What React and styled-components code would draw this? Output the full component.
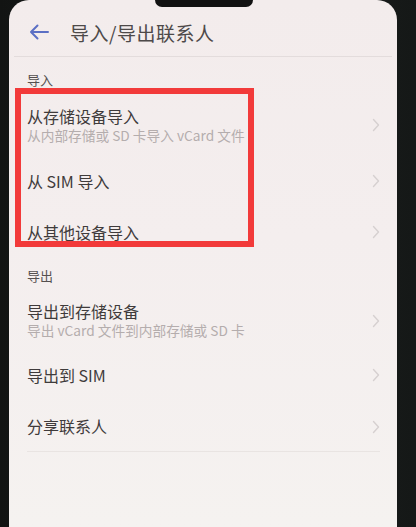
import React from 'react'
import styled, { createGlobalStyle } from 'styled-components'

const GlobalStyle = createGlobalStyle`
    html, body {
        margin: 0;
        padding: 0;
        background: #151817;
    }
    body {
        font-family: 'Noto Sans CJK SC', 'Noto Sans', sans-serif;
    }
`

const importItems = [
    { title: '从存储设备导入', sub: '从内部存储或 SD 卡导入 vCard 文件', h: 60 },
    { title: '从 SIM 导入', h: 52 },
    { title: '从其他设备导入', h: 50 },
]

const exportItems = [
    { title: '导出到存储设备', sub: '导出 vCard 文件到内部存储或 SD 卡', h: 55 },
    { title: '导出到 SIM', h: 54 },
    { title: '分享联系人', h: 50, last: true },
]

const Chevron = () => (
    <svg width="8" height="14" viewBox="0 0 8 14" fill="none">
        <path d="M1.5 1.5L6.5 7L1.5 12.5" stroke="#d6d0d0" strokeWidth="1.4" strokeLinecap="round" strokeLinejoin="round" />
    </svg>
)

const BackArrow = () => (
    <svg width="20" height="16" viewBox="0 0 20 16" fill="none">
        <path d="M19 8H2M8.5 1.5L2 8l6.5 6.5" stroke="#5b6fc4" strokeWidth="2" strokeLinecap="round" strokeLinejoin="round" />
    </svg>
)

const Row = ({ item }) => (
    <ListRow h={item.h} last={item.last}>
        <TextCol>
            <RowTitle>{item.title}</RowTitle>
            {item.sub && <RowSub>{item.sub}</RowSub>}
        </TextCol>
        <Chevron />
    </ListRow>
)

const App = () => {
    return (
        <>
            <GlobalStyle />
            <Page>
                <Screen>
                    <Notch />
                    <Header>
                        <BackArrow />
                        <HeaderTitle>导入/导出联系人</HeaderTitle>
                    </Header>
                    <Content>
                        <SectionLabel top={14} h={38}>导入</SectionLabel>
                        {importItems.map((item) => (
                            <Row key={item.title} item={item} />
                        ))}
                        <SectionLabel top={10} h={36}>导出</SectionLabel>
                        {exportItems.map((item) => (
                            <Row key={item.title} item={item} />
                        ))}
                    </Content>
                    <Highlight />
                </Screen>
            </Page>
        </>
    )
}

export default App

const Page = styled.div`
    display: flex;
    width: 416px;
    height: 527px;
    padding: 0 19px 0 9px;
    box-sizing: border-box;
    background: linear-gradient(90deg, #121413 0%, #1d201f 50%, #151817 100%);
    overflow: hidden;
`

const Screen = styled.div`
    position: relative;
    flex: 1;
    display: flex;
    flex-direction: column;
    border-radius: 20px 20px 0 0;
    background: linear-gradient(180deg, #f3ecec 0%, #f4eeee 45%, #f5f2f0 100%);
    overflow: hidden;
`

const Notch = styled.div`
    position: absolute;
    top: 0;
    left: 146px;
    width: 98px;
    height: 7px;
    background: #121212;
    border-radius: 0 0 9px 9px;
`

const Header = styled.div`
    display: flex;
    align-items: center;
    gap: 21px;
    height: 57px;
    padding: 8px 0 0 15px;
    box-sizing: border-box;
    margin: 0 5px;
    border-bottom: 1px solid #e3dcdc;
`

const HeaderTitle = styled.div`
    font-size: 19px;
    color: #4d4949;
    letter-spacing: 0.5px;
`

const Content = styled.div`
    display: flex;
    flex-direction: column;
    padding: 0 17px 0 18px;
`

const SectionLabel = styled.div`
    padding-top: ${(p) => p.top}px;
    height: ${(p) => p.h - p.top}px;
    font-size: 13px;
    line-height: 18px;
    color: #555050;
`

const ListRow = styled.div`
    display: flex;
    align-items: center;
    justify-content: space-between;
    height: ${(p) => p.h}px;
    box-sizing: border-box;
    border-bottom: ${(p) => (p.last ? '1px solid #e9e4e2' : 'none')};
`

const TextCol = styled.div`
    display: flex;
    flex-direction: column;
`

const RowTitle = styled.div`
    font-size: 16px;
    line-height: 19px;
    color: #3f3b3b;
`

const RowSub = styled.div`
    font-size: 13.7px;
    line-height: 18px;
    color: #b4adad;
`

const Highlight = styled.div`
    position: absolute;
    left: 6px;
    top: 88px;
    width: 239px;
    height: 159px;
    border: 6px solid #f23a3a;
    box-sizing: border-box;
`
